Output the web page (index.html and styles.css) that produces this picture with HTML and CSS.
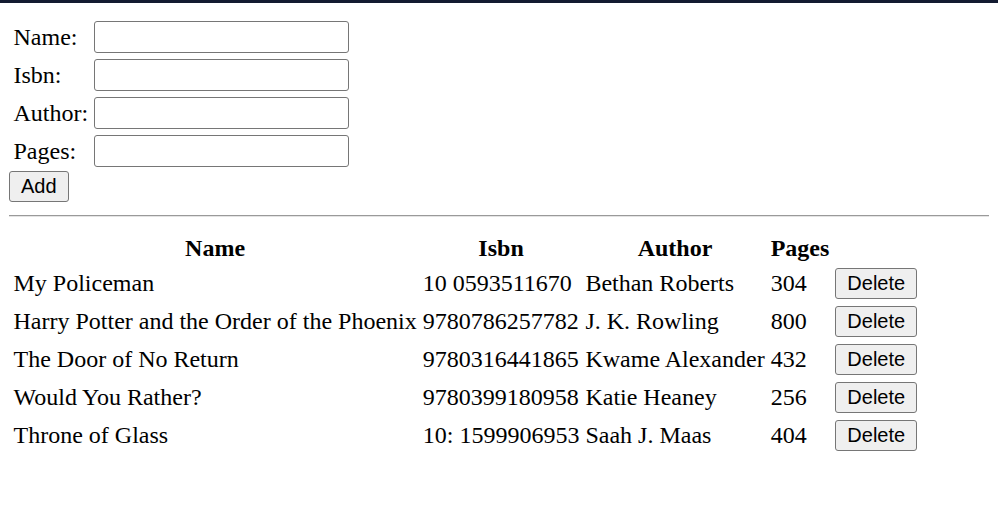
FILE: index.html
```html
<!DOCTYPE html>
<html>
<head>
<meta charset="utf-8">
<title>Books</title>
<link rel="stylesheet" href="styles.css">
</head>
<body>
<div class="topbar"></div>
<main class="page">
  <form class="book-form">
    <div class="fields">
      <label class="field-label" for="name">Name:</label>
      <input class="field-input" id="name" type="text">
      <label class="field-label" for="isbn">Isbn:</label>
      <input class="field-input" id="isbn" type="text">
      <label class="field-label" for="author">Author:</label>
      <input class="field-input" id="author" type="text">
      <label class="field-label" for="pages">Pages:</label>
      <input class="field-input" id="pages" type="text">
    </div>
    <button class="btn add-btn" type="button">Add</button>
  </form>
  <hr class="divider">
  <table class="books">
    <thead>
      <tr><th>Name</th><th>Isbn</th><th>Author</th><th>Pages</th><th></th></tr>
    </thead>
    <tbody>
      <tr><td>My Policeman</td><td>10 0593511670</td><td>Bethan Roberts</td><td>304</td><td><button class="btn del-btn" type="button">Delete</button></td></tr>
      <tr><td>Harry Potter and the Order of the Phoenix</td><td>9780786257782</td><td>J. K. Rowling</td><td>800</td><td><button class="btn del-btn" type="button">Delete</button></td></tr>
      <tr><td>The Door of No Return</td><td>9780316441865</td><td>Kwame Alexander</td><td>432</td><td><button class="btn del-btn" type="button">Delete</button></td></tr>
      <tr><td>Would You Rather?</td><td>9780399180958</td><td>Katie Heaney</td><td>256</td><td><button class="btn del-btn" type="button">Delete</button></td></tr>
      <tr><td>Throne of Glass</td><td>10: 1599906953</td><td>Saah J. Maas</td><td>404</td><td><button class="btn del-btn" type="button">Delete</button></td></tr>
    </tbody>
  </table>
</main>
</body>
</html>
```
FILE: styles.css
```css
html, body {
  margin: 0;
  padding: 0;
  background: #ffffff;
}
body {
  font-family: "Liberation Serif", "Times New Roman", serif;
  font-size: 24px;
  color: #000000;
}
.topbar {
  height: 3px;
  background: #131b31;
}
.page {
  padding: 18px 9px 0 9px;
}
.book-form {
  margin: 0;
}
.fields {
  display: grid;
  grid-template-columns: 75px 255px;
  column-gap: 5.5px;
  row-gap: 6px;
  align-items: center;
  padding-left: 4.5px;
}
.field-label {
  line-height: 28px;
}
.field-input {
  box-sizing: border-box;
  width: 255px;
  height: 32px;
  margin: 0;
  border: 1px solid #767676;
  border-radius: 3px;
  background: #ffffff;
  font-size: 20px;
  padding: 2px 3px;
}
.btn {
  box-sizing: border-box;
  height: 31px;
  margin: 0;
  padding: 0 11px;
  border: 1px solid #767676;
  border-radius: 3px;
  background: #efefef;
  color: #000000;
  font-family: "Liberation Sans", Arial, sans-serif;
  font-size: 20px;
  line-height: 29px;
}
.add-btn {
  display: block;
  margin-top: 4px;
}
.divider {
  margin: 13px 0 12px 0;
  height: 0;
  border: 0;
  border-top: 1px solid #9a9a9a;
  border-bottom: 1px solid #e4e4e4;
}
.books {
  border-collapse: separate;
  border-spacing: 3px;
}
.books th {
  font-weight: bold;
  text-align: center;
  padding: 3px 1.5px 1px 1.5px;
}
.books td {
  text-align: left;
  padding: 2px 1.5px;
  white-space: nowrap;
}
.del-btn {
  display: block;
}
```
